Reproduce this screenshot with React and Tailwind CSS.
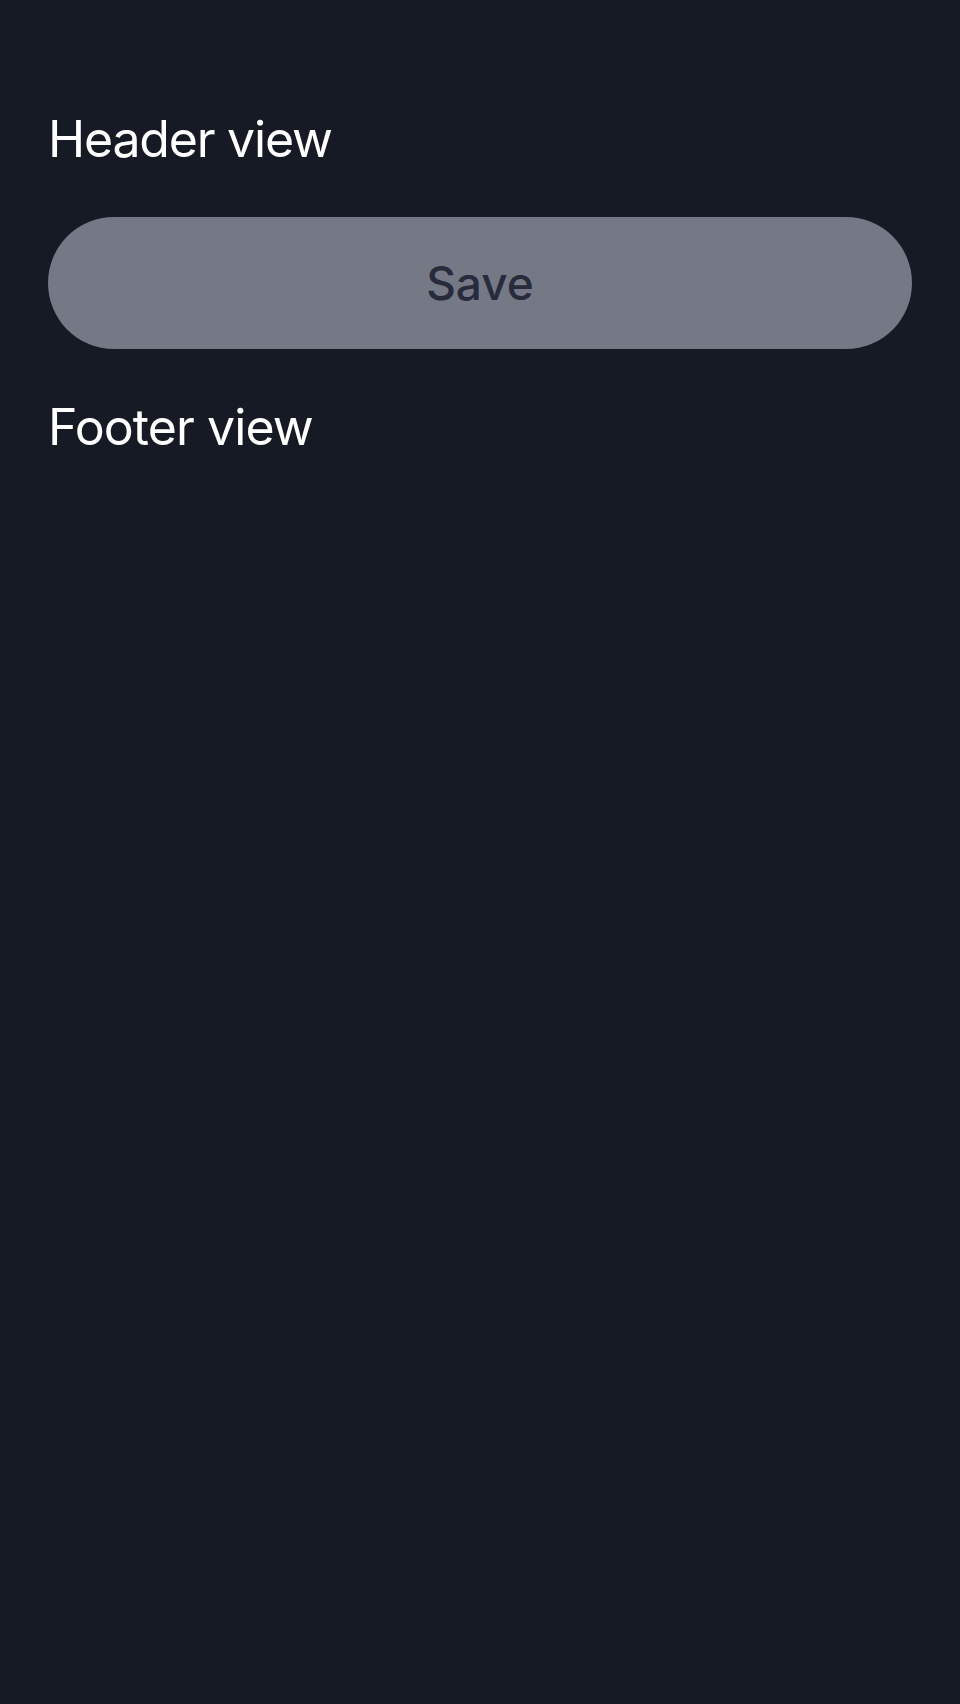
export default function App() {
  return (
    <div
      className="min-h-[1704px] w-full bg-[#161a24] px-12 pt-[109px] flex flex-col gap-12"
      style={{ fontFamily: "Inter, 'Noto Sans', sans-serif" }}
    >
      <h1 className="text-[50px] leading-[60px] tracking-[-1.2px] text-white font-normal">Header view</h1>
      <button className="h-[132px] w-full rounded-full bg-[#757986] text-[#272b3b] text-[46px] font-medium">
        Save
      </button>
      <p className="text-[50px] leading-[60px] tracking-[-0.9px] text-white">Footer view</p>
    </div>
  );
}
